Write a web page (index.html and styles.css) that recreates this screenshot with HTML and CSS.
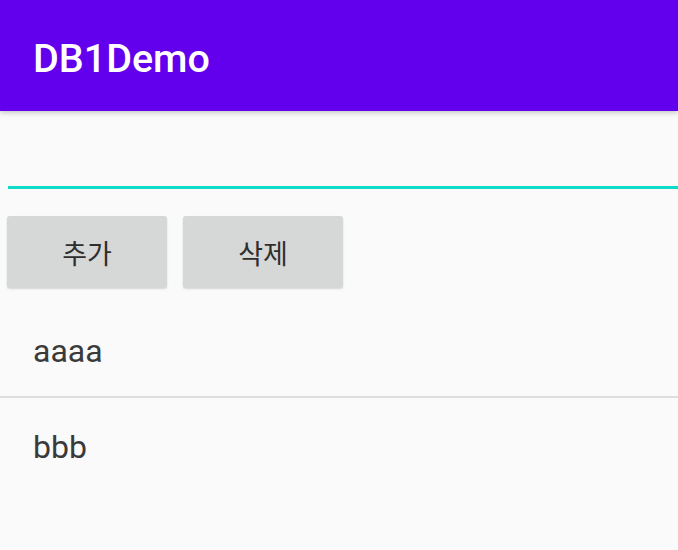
FILE: index.html
```html
<!DOCTYPE html>
<html>
<head>
  <title>DB1Demo</title>
  <link rel="stylesheet" href="styles.css">
</head>
<body>

  <header class="appbar">
    <span class="title">DB1Demo</span>
  </header>

  <div class="campo">
    <input type="text" class="testo">
  </div>

  <div class="bottoni">
    <button class="bottone">추가</button>
    <button class="bottone">삭제</button>
  </div>

  <ul class="lista">
    <li class="voce">aaaa</li>
    <li class="voce">bbb</li>
  </ul>

</body>
</html>
```

FILE: styles.css
```css
body {
  margin: 0;
  background-color: #fafafa;
  font-family: Roboto, "Noto Sans CJK KR", sans-serif;
}

.appbar {
  display: flex;
  align-items: flex-start;
  box-sizing: border-box;
  height: 111px;
  padding: 39px 33px 0;
  background-color: #6200ee;
  box-shadow: 0 2px 5px rgba(0, 0, 0, 0.2);
  position: relative;
}

.title {
  color: #fff;
  font-size: 39.5px;
  line-height: 39px;
  font-weight: 500;
}

.campo {
  padding-left: 8px;
}

.testo {
  display: block;
  box-sizing: border-box;
  width: 100%;
  height: 78px;
  border: none;
  border-bottom: 3px solid #0fdcc8;
  background: transparent;
  outline: none;
  font-size: 30px;
  font-family: Roboto, sans-serif;
}

.bottoni {
  display: flex;
  gap: 16px;
  padding-left: 7px;
  margin-top: 27px;
}

.bottone {
  width: 160px;
  height: 72px;
  border: none;
  border-radius: 3px;
  background-color: #d6d7d7;
  color: #2e2e2e;
  font-family: "Noto Sans CJK KR", sans-serif;
  font-size: 27px;
  box-shadow: 0 1px 2px rgba(0, 0, 0, 0.15);
  cursor: pointer;
}

.lista {
  list-style: none;
  margin: 14px 0 0;
  padding: 0;
}

.voce {
  display: flex;
  align-items: center;
  box-sizing: border-box;
  height: 94px;
  padding: 3px 33px 0;
  font-size: 32px;
  color: #3a3a3a;
}

.voce + .voce {
  border-top: 2px solid #dedede;
  height: 96px;
}
```
